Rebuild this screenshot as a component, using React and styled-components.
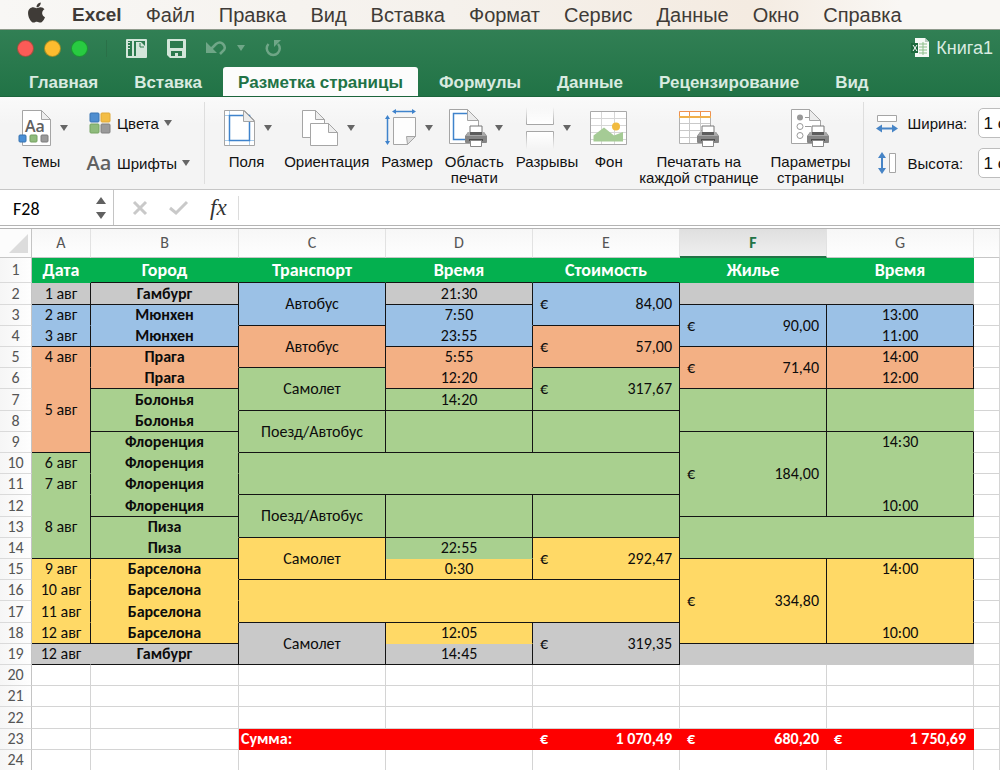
import React, { useState } from 'react';
import styled, { createGlobalStyle, css } from 'styled-components';
import { FaApple } from 'react-icons/fa';

const UI_FONT = '"Liberation Sans", Arial, sans-serif';
const CELL_FONT = 'Carlito, Lato, "Open Sans", sans-serif';

const FILLS = {
  head: '#04b04f',
  gray: '#c9c9c9',
  blue: '#9bc1e6',
  orange: '#f3b084',
  green: '#a9d08f',
  yellow: '#ffd966',
  red: '#fe0000'
};

const GlobalStyle = createGlobalStyle`
  * {
    box-sizing: border-box;
  }

  body {
    margin: 0;
    overflow: hidden;
    font-family: ${UI_FONT};
    color: #111;
    background: #fff;
  }

  button, input, select {
    margin: 0;
    padding: 0;
    border: 0;
    background: none;
    color: inherit;
    font: inherit;
  }
`;

// Styled Components
const Window = styled.div`
  display: flex;
  flex-direction: column;
  height: 100vh;
  overflow: hidden;
`;

const MenuBar = styled.nav`
  display: flex;
  align-items: center;
  gap: 24px;
  flex: none;
  height: 30px;
  padding-left: 25px;
  background: linear-gradient(90deg, #f8f7f5, #f5f1ec 45%, #f4ebe1 75%, #f9f7f4 90%);
  border-bottom: 1px solid #8f9a8c;
  color: #3f3b37;
`;

const MenuItem = styled.button`
  font-size: ${props => (props.$bold ? 19 : 20)}px;
  line-height: 28px;
  font-weight: ${props => (props.$bold ? 700 : 400)};
  white-space: nowrap;
`;

const AppleItem = styled(MenuItem)`
  display: flex;
  margin-top: -4px;
`;

const TitleArea = styled.header`
  flex: none;
  background: linear-gradient(#317f54, #217346);
  border-bottom: 1px solid #1c653c;
  color: #d9ebe0;
`;

const TitleBar = styled.div`
  display: flex;
  align-items: center;
  height: 36px;
  padding: 0 7px 0 17px;
`;

const Lights = styled.div`
  display: flex;
  gap: 10px;
  padding-right: 18px;
  margin-right: 19px;
  border-right: 1px solid #2a7048;
`;

const Light = styled.button`
  width: 17px;
  height: 17px;
  border-radius: 50%;
  border: 1px solid rgba(0, 60, 20, 0.35);
  background: ${props => props.$color};
`;

const QuickButton = styled.button`
  display: flex;
  align-items: center;
  gap: 10px;
  margin-right: 20px;
  color: #d3e6da;
  opacity: ${props => (props.$dim ? 0.4 : 1)};
`;

const BookTitle = styled.div`
  display: flex;
  align-items: center;
  gap: 6px;
  margin-left: auto;
  font-size: 18px;
  white-space: nowrap;
`;

const Tabs = styled.div`
  display: flex;
  align-items: flex-end;
  gap: 6px;
  height: 30px;
  padding-left: 14px;
`;

const Tab = styled.button`
  height: 29px;
  padding: 0 15px;
  font-size: 17px;
  line-height: 32px;
  font-weight: 700;
  white-space: nowrap;
  border-radius: 3px 3px 0 0;

  ${props => props.$active && css`
    background: #fcfcfc;
    color: #217346;
  `}
`;

const Ribbon = styled.section`
  display: flex;
  gap: 12px;
  flex: none;
  height: 93px;
  padding: 5px 0 0 15px;
  overflow: hidden;
  background: linear-gradient(#fafafa, #f4f4f4 30%);
  border-bottom: 1px solid #c6c6c6;
`;

const Divider = styled.div`
  flex: none;
  width: 1px;
  height: 82px;
  margin: 0 ${props => props.$space || 0}px 0 0;
  background: #dedede;
`;

const Tool = styled.button`
  display: flex;
  flex-direction: column;
  align-items: center;
  align-self: flex-start;
  flex: none;
  font-size: 15px;
  line-height: 16px;
  text-align: center;
  white-space: pre-line;
`;

const ToolIcon = styled.span`
  display: flex;
  align-items: center;
  gap: 8px;
  height: 52px;
  padding-left: ${props => (props.$arrow ? 3 : 0)}px;
`;

const Arrow = styled.span`
  width: 0;
  height: 0;
  border: 4px solid transparent;
  border-top: 6px solid ${props => props.$color || '#666'};
  border-bottom: 0;
`;

const SmallTools = styled.div`
  display: flex;
  flex-direction: column;
  gap: 10px;
  flex: none;
  margin: 0 2px 0 6px;
  padding-top: 6px;
`;

const SmallTool = styled.button`
  display: flex;
  align-items: center;
  gap: 5px;
  height: 30px;
  font-size: 15px;
  white-space: nowrap;
`;

const FontSample = styled.span`
  width: 26px;
  font-family: "Open Sans", sans-serif;
  font-size: 20px;
  line-height: 24px;
  font-weight: 600;
  color: #606060;
`;

const SizeFields = styled.div`
  display: flex;
  flex-direction: column;
  gap: 10px;
  flex: none;
  padding-top: 6px;
`;

const SizeField = styled.label`
  display: grid;
  grid-template-columns: 22px 60px 90px;
  align-items: center;
  gap: 10px;
  font-size: 15px;
`;

const SizeSelect = styled.select`
  height: 30px;
  padding: 0 5px;
  appearance: none;
  border: 1px solid #bdbdbd;
  border-radius: 5px;
  background: #fff;
  font-size: 17px;
`;

const FormulaBar = styled.section`
  display: flex;
  align-items: center;
  flex: none;
  height: 36px;
  background: #fff;
  border-bottom: 1px solid #b4b4b4;
`;

const NameBox = styled.div`
  display: flex;
  align-items: center;
  justify-content: space-between;
  width: 114px;
  height: 100%;
  padding: 0 7px 0 13px;
  border-right: 1px solid #c4c4c4;
`;

const NameInput = styled.input`
  width: 70px;
  padding-top: 3px;
  font-family: ${CELL_FONT};
  font-size: 18px;
  color: #000;
`;

const Stepper = styled.span`
  display: flex;
  flex-direction: column;
  gap: 8px;
`;

const StepButton = styled.button`
  border: 5px solid transparent;
  border-top: ${props => (props.$up ? '0' : '7px solid #606060')};
  border-bottom: ${props => (props.$up ? '7px solid #606060' : '0')};
`;

const FormulaActions = styled.div`
  display: flex;
  align-items: center;
  gap: 21px;
  padding: 0 11px 0 18px;
`;

const FormulaButton = styled.button`
  display: flex;
  font: italic 23px/30px "Liberation Serif", serif;
  color: #333;
`;

const FormulaInput = styled.input`
  flex: 1;
  height: 24px;
  padding: 0 6px;
  border-left: 1px solid #dcdcdc;
  font-family: ${CELL_FONT};
  font-size: 16px;
`;

const Sheet = styled.main`
  flex: 1;
  min-height: 0;
  overflow: hidden;
  margin-top: 2px;
  border-top: 1px solid #b4b4b4;
`;

const Grid = styled.table`
  width: 100%;
  table-layout: fixed;
  border-collapse: separate;
  border-spacing: 0;
  font-family: ${CELL_FONT};
  font-size: 16px;
  line-height: 20px;
  color: #0c0c0c;

  td, th {
    padding: 0;
    overflow: hidden;
    white-space: nowrap;
  }
`;

const ColumnHead = styled.th`
  height: 29px;
  font-weight: 400;
  color: #555;
  background: linear-gradient(#f7f7f7, #fefefe);
  border-right: 1px solid #e2e2e2;
  border-bottom: 1px solid #c6c6c6;

  ${props => props.$active && css`
    font-weight: 700;
    color: #217346;
    background: linear-gradient(#dfdfdf, #efefef);
    border-bottom: 2px solid #217346;
  `}
`;

const Corner = styled.th`
  background: #fcfcfc;
  border-right: 1px solid #c4c4c4;
  border-bottom: 1px solid #c6c6c6;
`;

const CornerMark = styled.span`
  display: block;
  width: 0;
  height: 0;
  margin-left: 9px;
  border-left: 19px solid transparent;
  border-bottom: 19px solid #dcdcdc;
`;

const Row = styled.tr`
  height: 21px;

  &:nth-child(5n + 2) {
    height: 22px;
  }

  &:first-child {
    height: 25px;
  }
`;

const RowHead = styled.th`
  font-weight: 400;
  color: #555;
  background: linear-gradient(90deg, #f6f6f6, #fefefe);
  border-right: 1px solid #c4c4c4;
  border-bottom: 1px solid #dadada;
`;

const edge = (on, fill) => {
  if (on) return '#141414';
  return fill ? 'transparent' : '#d4d4d4';
};

const Cell = styled.td`
  text-align: ${props => props.$align || 'center'};
  font-weight: ${props => (props.$bold ? 700 : 400)};
  color: ${props => (props.$light ? '#fff' : 'inherit')};
  font-size: ${props => (props.$title ? 18 : 16)}px;
  background-color: ${props => FILLS[props.$fill] || '#fff'};
  border-right: 1px solid ${props => edge(props.$right, props.$fill)};
  border-bottom: 1px solid ${props => edge(props.$bottom, props.$fill)};
`;

const Money = styled.span`
  display: flex;
  justify-content: space-between;
  padding: 0 7px;
`;

const SumLabel = styled.span`
  padding-left: 2px;
`;

// Icons
const Printer = ({ x, y }) => (
  <g transform={`translate(${x} ${y})`}>
    <path d="M5 8V1h12v7" fill="#fff" stroke="#777" />
    <path d="M3 7h16l3 4v6q0 1-1 1H1q-1 0-1-1v-6z" fill="#858585" />
    <path d="M3 7h16l2 4H1z" fill="#a9a9a9" />
    <path d="M5 7h12v3H5z" fill="#5c5c5c" />
    <path d="M4 14h14v2H4z" fill="#4c4c4c" />
    <path d="M5.500 15.500h11v6h-11z" fill="#fff" stroke="#888" />
  </g>
);

const ThemesIcon = () => (
  <svg width="34" height="38" viewBox="0 0 34 38">
    <path d="M4.500 1.500h19l9 9v26h-28z" fill="#fff" stroke="#a5a5a5" />
    <path d="M23.500 1.500v9h9z" fill="#eee" stroke="#a5a5a5" />
    <text x="7" y="23" fontFamily="Open Sans, sans-serif" fontSize="16" fontWeight="600" fill="#606060">Aa</text>
    <rect x="1" y="26" width="7" height="7" rx="1" fill="#4a8fd6" stroke="#3672b0" />
    <rect x="12" y="26" width="7" height="7" rx="1" fill="#8fbb7c" stroke="#74a061" />
    <rect x="23" y="26" width="7" height="7" rx="1" fill="#9a9a9a" stroke="#7c7c7c" />
  </svg>
);

const ColorsIcon = () => (
  <svg width="26" height="22" viewBox="-3 0 26 22">
    <rect x="1" y="1" width="9" height="9" rx="1" fill="#4f8ed0" stroke="#3a74b3" />
    <rect x="12" y="1" width="9" height="9" rx="1" fill="#f3bd45" stroke="#e0a93a" />
    <rect x="1" y="12" width="9" height="9" rx="1" fill="#8fbb7c" stroke="#76a463" />
    <rect x="12" y="12" width="9" height="9" rx="1" fill="#9a9a9a" stroke="#808080" />
  </svg>
);

const MarginsIcon = () => (
  <svg width="32" height="38" viewBox="0 0 32 38">
    <path d="M.5 1.500h20l10 10v25H.5z" fill="#fff" stroke="#a5a5a5" />
    <path d="M5.500 2v34M25.500 12v24M1 6.500h18M1 31.500h29" stroke="#a9cdec" />
    <path d="M5.500 6.500h20v25h-20z" fill="none" stroke="#3f83cc" strokeWidth="1.500" />
    <path d="M19.500 1.500v11h11z" fill="#ececec" stroke="#a5a5a5" />
  </svg>
);

const OrientationIcon = () => (
  <svg width="37" height="38" viewBox="0 0 37 38">
    <path d="M.5 1.500h13l9 9v18H.5z" fill="#fff" stroke="#a5a5a5" />
    <path d="M13.500 1.500v9h9z" fill="#eee" stroke="#a5a5a5" />
    <path d="M8.500 14.500h18l9 9v13h-27z" fill="#fff" stroke="#a5a5a5" />
    <path d="M26.500 14.500v9h9z" fill="#eee" stroke="#a5a5a5" />
  </svg>
);

const SizeIcon = () => (
  <svg width="32" height="38" viewBox="0 0 32 38">
    <path d="M8.500 8.500h22v19l-8 8h-14z" fill="#fdfdfd" stroke="#a5a5a5" />
    <path d="M22.500 35.500l-1-8 9 0z" fill="#ddd" stroke="#a5a5a5" />
    <path d="M9 2.500h20M2.500 8v26" stroke="#3f83cc" strokeWidth="1.500" />
    <path d="M7 2.500l4-2.500v5zM31 2.500l-4-2.500v5zM2.500 6L0 10h5zM2.500 36L0 32h5z" fill="#3f83cc" />
  </svg>
);

const PrintAreaIcon = () => (
  <svg width="38" height="38" viewBox="0 0 38 38">
    <path d="M.5 .5h18l11 11v23H.5z" fill="#fff" stroke="#a5a5a5" />
    <path d="M18 4.500H4.500v26H17" fill="none" stroke="#3f83cc" strokeWidth="1.500" />
    <path d="M18.500 .5v11h11z" fill="#ececec" stroke="#a5a5a5" />
    <Printer x={16} y={16} />
  </svg>
);

const BreaksIcon = () => (
  <svg width="30" height="42" viewBox="0 0 30 42">
    <defs>
      <linearGradient id="fadeTop" x1="0" y1="0" x2="0" y2="1">
        <stop offset="0" stopColor="#a5a5a5" stopOpacity="0" />
        <stop offset="1" stopColor="#a5a5a5" />
      </linearGradient>
      <linearGradient id="fadeBottom" x1="0" y1="1" x2="0" y2="0">
        <stop offset="0" stopColor="#a5a5a5" stopOpacity="0" />
        <stop offset="1" stopColor="#a5a5a5" />
      </linearGradient>
      <linearGradient id="paper" x1="0" y1="0" x2="0" y2="1">
        <stop offset="0" stopColor="#fff" stopOpacity="0" />
        <stop offset=".4" stopColor="#fff" />
        <stop offset=".6" stopColor="#fff" />
        <stop offset="1" stopColor="#fff" stopOpacity="0" />
      </linearGradient>
    </defs>
    <path d="M1 0h28v42H1z" fill="url(#paper)" />
    <path d="M1 18h28v6H1z" fill="#f5f5f5" />
    <path d="M1.500 0v17.500h27V0" fill="none" stroke="url(#fadeTop)" />
    <path d="M1.500 42V24.500h27V42" fill="none" stroke="url(#fadeBottom)" />
  </svg>
);

const BackgroundIcon = () => (
  <svg width="37" height="36" viewBox="0 0 37 36">
    <path d="M.5 1.500h36v33H.5z" fill="#fff" stroke="#a9a9a9" />
    <path d="M11.500 2v32M24.500 2v32M1 8.500h35M1 15.500h35M1 22.500h35M1 29.500h35" stroke="#d6d6d6" />
    <path d="M3.500 31.500v-6L14 17.500l10 8 9-3.500v9.500z" fill="#a5cb95" />
    <circle cx="26" cy="16.500" r="4" fill="#f1bb40" />
  </svg>
);

const PrintTitlesIcon = () => (
  <svg width="42" height="38" viewBox="0 0 42 38">
    <path d="M1.500 3.500h31v31h-31z" fill="#fff" stroke="#b0b0b0" />
    <path d="M11.500 8v26M22.500 8v26M2 14.500h30M2 21.500h30M2 28.500h30" stroke="#c9c9c9" />
    <path d="M1.500 2.500h31v5h-31zM11.500 3v5M22.500 3v5" fill="#fff" stroke="#ee9150" />
    <path d="M1 8h32" stroke="#f0b04b" strokeWidth="2" />
    <Printer x={19} y={16} />
  </svg>
);

const PageSetupIcon = () => (
  <svg width="39" height="38" viewBox="0 0 39 38">
    <path d="M.5 .5h18l11 11v23H.5z" fill="#fff" stroke="#a5a5a5" />
    <path d="M18.500 .5v11h11z" fill="#ececec" stroke="#a5a5a5" />
    <circle cx="9" cy="8.500" r="3" fill="#999" />
    <circle cx="9" cy="17.500" r="3" fill="none" stroke="#999" />
    <circle cx="9" cy="26.500" r="3" fill="none" stroke="#999" />
    <path d="M14 8.500h4M14 17.500h6" stroke="#999" />
    <Printer x={16} y={16} />
  </svg>
);

const WidthIcon = () => (
  <svg width="22" height="20" viewBox="0 0 22 20">
    <path d="M1.500 2.500h19v6h-19z" fill="#fff" stroke="#a5a5a5" />
    <path d="M4 15.500h14" stroke="#4684c6" strokeWidth="2" />
    <path d="M0 15.500l6-4v8zM22 15.500l-6-4v8z" fill="#4684c6" />
  </svg>
);

const HeightIcon = () => (
  <svg width="22" height="22" viewBox="0 0 22 22">
    <path d="M13.500 1.500h6v19h-6z" fill="#fff" stroke="#a5a5a5" />
    <path d="M6 4v14" stroke="#4684c6" strokeWidth="2" />
    <path d="M6 0l-4 6h8zM6 22l-4-6h8z" fill="#4684c6" />
  </svg>
);

const TemplateIcon = () => (
  <svg width="21" height="19" viewBox="0 0 21 19">
    <rect width="21" height="19" rx="1" fill="currentColor" />
    <path d="M2 2h4v15H2zM8 2h11v15H8z" fill="#2c7a4e" />
    <path d="M2 3.500h2M2 6.500h2M2 9.500h2" stroke="currentColor" />
    <path d="M10 3h5l4 4v10h-9z" fill="currentColor" />
    <path d="M14 4v4h4" fill="none" stroke="#2c7a4e" />
  </svg>
);

const SaveIcon = () => (
  <svg width="19" height="19" viewBox="0 0 19 19">
    <path d="M0 1q0-1 1-1h17q1 0 1 1v17q0 1-1 1H3l-3-3z" fill="currentColor" />
    <path d="M3 2h13v7H3zM4 12h11v5h-4v-3H8v3H4z" fill="#2c7a4e" />
  </svg>
);

const UndoIcon = () => (
  <svg width="21" height="16" viewBox="0 0 21 16">
    <path d="M0 2v11h11z" fill="currentColor" />
    <path d="M5 9l5-5q4-3 7 0t1 6l-4 4" fill="none" stroke="currentColor" strokeWidth="2.500" />
  </svg>
);

const RedoIcon = () => (
  <svg width="17" height="18" viewBox="0 0 17 18">
    <path d="M3.500 5a6.500 6.500 0 1 0 9.500 0" fill="none" stroke="currentColor" strokeWidth="2.500" />
    <path d="M9 1h7l-7 7z" fill="currentColor" />
  </svg>
);

const BookIcon = () => (
  <svg width="19" height="20" viewBox="0 0 19 20">
    <path d="M4 0h10l4 4v15H4z" fill="#f5faf6" />
    <path d="M14 0v4h4z" fill="#b9cbbf" />
    <path d="M8 6h8M8 9h8M8 12h8M8 15h8M12 4v13" stroke="#8dbf8a" />
    <path d="M0 5h7v10H0z" fill="#1d6a3e" />
    <path d="M2 7l4 6M6 7l-4 6" stroke="#fff" />
  </svg>
);

const CancelIcon = () => (
  <svg width="16" height="16" viewBox="0 0 16 16">
    <path d="M2 2l12 12M14 2L2 14" stroke="#c9c9c9" strokeWidth="3" />
  </svg>
);

const AcceptIcon = () => (
  <svg width="20" height="16" viewBox="0 0 20 16">
    <path d="M1 8l6 5L18 2" fill="none" stroke="#c9c9c9" strokeWidth="3" />
  </svg>
);

// Data
const MENU = ['Файл', 'Правка', 'Вид', 'Вставка', 'Формат', 'Сервис', 'Данные', 'Окно', 'Справка'];
const TABS = ['Главная', 'Вставка', 'Разметка страницы', 'Формулы', 'Данные', 'Рецензирование', 'Вид'];
const COLUMNS = ['A', 'B', 'C', 'D', 'E', 'F', 'G'];
const COLUMN_WIDTHS = [32, 59, 148, 147, 147, 147, 147, 147];

const TOOLS = [
  { label: 'Поля', icon: MarginsIcon, arrow: true },
  { label: 'Ориентация', icon: OrientationIcon, arrow: true },
  { label: 'Размер', icon: SizeIcon, arrow: true },
  { label: 'Область\nпечати', icon: PrintAreaIcon, arrow: true },
  { label: 'Разрывы', icon: BreaksIcon, arrow: true },
  { label: 'Фон', icon: BackgroundIcon },
  { label: 'Печатать на\nкаждой странице', icon: PrintTitlesIcon },
  { label: 'Параметры\nстраницы', icon: PageSetupIcon }
];

// edges: "b" draws the bottom line, "r" the right line
const cell = (text, fill, edges = '', extra = {}) => ({ text, fill, edges, ...extra });
const title = (text, edges) => cell(text, 'head', edges, { bold: true, light: true, title: true });
const city = (text, fill, edges) => cell(text, fill, edges, { bold: true });
const tall = (text, fill, edges, rows = 2) => cell(text, fill, edges, { rows });
const money = (text, fill, rows = 2) => cell(text, fill, 'br', { rows, money: true });
const total = text => cell(text, 'red', '', { money: true, bold: true, light: true });
const wide = (fill, edges, rows, cols) => cell('', fill, edges, { rows, cols });

const ROWS = [
  [title('Дата'), title('Город', 'b'), title('Транспорт', 'b'), title('Время', 'b'), title('Стоимость', 'b'), title('Жилье'), title('Время')],
  [cell('1 авг', 'gray', 'br'), city('Гамбург', 'gray', 'br'), tall('Автобус', 'blue', 'br'), cell('21:30', 'gray', 'br'), money('84,00', 'blue'), wide('gray', 'b', 1, 2)],
  [cell('2 авг', 'blue', 'r'), city('Мюнхен', 'blue', 'r'), cell('7:50', 'blue', 'r'), money('90,00', 'blue'), cell('13:00', 'blue', 'r')],
  [cell('3 авг', 'blue', 'br'), city('Мюнхен', 'blue', 'br'), tall('Автобус', 'orange', 'br'), cell('23:55', 'blue', 'br'), money('57,00', 'orange'), cell('11:00', 'blue', 'br')],
  [cell('4 авг', 'orange', 'r'), city('Прага', 'orange', 'r'), cell('5:55', 'orange', 'r'), money('71,40', 'orange'), cell('14:00', 'orange', 'r')],
  [tall('5 авг', 'orange', 'br', 4), city('Прага', 'orange', 'br'), tall('Самолет', 'green', 'br'), cell('12:20', 'orange', 'br'), money('317,67', 'green'), cell('12:00', 'orange', 'br')],
  [city('Болонья', 'green', 'r'), cell('14:20', 'green', 'br'), tall('', 'green', 'br'), tall('', 'green', 'b')],
  [city('Болонья', 'green', 'br'), tall('Поезд/Автобус', 'green', 'br'), tall('', 'green', 'br'), tall('', 'green', 'br')],
  [city('Флоренция', 'green', 'r'), money('184,00', 'green', 4), cell('14:30', 'green', 'r')],
  [cell('6 авг', 'green', 'r'), city('Флоренция', 'green', 'r'), wide('green', 'br', 2, 3), cell('', 'green', 'r')],
  [cell('7 авг', 'green', 'r'), city('Флоренция', 'green', 'r'), cell('', 'green', 'r')],
  [tall('8 авг', 'green', 'br', 3), city('Флоренция', 'green', 'br'), tall('Поезд/Автобус', 'green', 'br'), tall('', 'green', 'br'), tall('', 'green', 'br'), cell('10:00', 'green', 'br')],
  [city('Пиза', 'green', 'r'), wide('green', 'b', 2, 2)],
  [city('Пиза', 'green', 'br'), tall('Самолет', 'yellow', 'br'), cell('22:55', 'green', 'r'), money('292,47', 'yellow')],
  [cell('9 авг', 'yellow', 'r'), city('Барселона', 'yellow', 'r'), cell('0:30', 'yellow', 'br'), money('334,80', 'yellow', 4), cell('14:00', 'yellow', 'r')],
  [cell('10 авг', 'yellow', 'r'), city('Барселона', 'yellow', 'r'), wide('yellow', 'br', 2, 3), cell('', 'yellow', 'r')],
  [cell('11 авг', 'yellow', 'r'), city('Барселона', 'yellow', 'r'), cell('', 'yellow', 'r')],
  [cell('12 авг', 'yellow', 'br'), city('Барселона', 'yellow', 'br'), tall('Самолет', 'gray', 'br'), cell('12:05', 'yellow', 'r'), money('319,35', 'gray'), cell('10:00', 'yellow', 'br')],
  [cell('12 авг', 'gray', 'b'), city('Гамбург', 'gray', 'br'), cell('14:45', 'gray', 'br'), wide('gray', '', 1, 2)],
  COLUMNS.map(() => cell('')),
  COLUMNS.map(() => cell('')),
  COLUMNS.map(() => cell('')),
  [cell(''), cell(''), cell('Сумма:', 'red', '', { bold: true, light: true, align: 'left' }), cell('', 'red'), total('1 070,49'), total('680,20'), total('1 750,69')],
  COLUMNS.map(() => cell(''))
];

const CellContent = ({ data }) => {
  if (data.money) {
    return (
      <Money>
        <span>€</span>
        <span>{data.text}</span>
      </Money>
    );
  }
  return data.align === 'left' ? <SumLabel>{data.text}</SumLabel> : data.text;
};

const Spreadsheet = () => (
  <Sheet>
    <Grid>
      <colgroup>
        {COLUMN_WIDTHS.map((width, i) => <col key={i} width={width} />)}
        <col />
      </colgroup>
      <thead>
        <tr>
          <Corner><CornerMark /></Corner>
          {COLUMNS.map(name => (
            <ColumnHead key={name} scope="col" $active={name === 'F'}>{name}</ColumnHead>
          ))}
          <ColumnHead />
        </tr>
      </thead>
      <tbody>
        {ROWS.map((cells, i) => (
          <Row key={i}>
            <RowHead scope="row">{i + 1}</RowHead>
            {cells.map((data, j) => (
              <Cell
                key={j}
                rowSpan={data.rows}
                colSpan={data.cols}
                $fill={data.fill}
                $align={data.align}
                $bold={data.bold}
                $light={data.light}
                $title={data.title}
                $bottom={data.edges.includes('b')}
                $right={data.edges.includes('r')}
              >
                <CellContent data={data} />
              </Cell>
            ))}
            <Cell />
          </Row>
        ))}
      </tbody>
    </Grid>
  </Sheet>
);

const App = () => {
  const [activeTab, setActiveTab] = useState('Разметка страницы');
  const [address, setAddress] = useState('F28');
  const [formula, setFormula] = useState('');

  return (
    <Window>
      <GlobalStyle />
      <MenuBar>
        <AppleItem aria-label="Apple"><FaApple size={23} /></AppleItem>
        <MenuItem $bold>Excel</MenuItem>
        {MENU.map(item => <MenuItem key={item}>{item}</MenuItem>)}
      </MenuBar>

      <TitleArea>
        <TitleBar>
          <Lights>
            <Light $color="#fc5b57" aria-label="Закрыть" />
            <Light $color="#fdbc2f" aria-label="Свернуть" />
            <Light $color="#28cb41" aria-label="Развернуть" />
          </Lights>
          <QuickButton aria-label="Шаблоны"><TemplateIcon /></QuickButton>
          <QuickButton aria-label="Сохранить"><SaveIcon /></QuickButton>
          <QuickButton $dim aria-label="Отменить"><UndoIcon /><Arrow $color="#d3e6da" /></QuickButton>
          <QuickButton $dim aria-label="Вернуть"><RedoIcon /></QuickButton>
          <BookTitle>
            <BookIcon />
            Книга1
          </BookTitle>
        </TitleBar>
        <Tabs role="tablist">
          {TABS.map(tab => (
            <Tab
              key={tab}
              role="tab"
              aria-selected={tab === activeTab}
              $active={tab === activeTab}
              onClick={() => setActiveTab(tab)}
            >
              {tab}
            </Tab>
          ))}
        </Tabs>
      </TitleArea>

      <Ribbon>
        <Tool>
          <ToolIcon $arrow><ThemesIcon /><Arrow /></ToolIcon>
          Темы
        </Tool>
        <SmallTools>
          <SmallTool><ColorsIcon />Цвета<Arrow /></SmallTool>
          <SmallTool><FontSample>Aa</FontSample>Шрифты<Arrow /></SmallTool>
        </SmallTools>
        <Divider $space={4} />
        {TOOLS.map(({ label, icon: Icon, arrow }) => (
          <Tool key={label}>
            <ToolIcon $arrow={arrow}><Icon />{arrow && <Arrow />}</ToolIcon>
            {label}
          </Tool>
        ))}
        <Divider />
        <SizeFields>
          <SizeField>
            <WidthIcon />
            Ширина:
            <SizeSelect><option>1 стр.</option></SizeSelect>
          </SizeField>
          <SizeField>
            <HeightIcon />
            Высота:
            <SizeSelect><option>1 стр.</option></SizeSelect>
          </SizeField>
        </SizeFields>
      </Ribbon>

      <FormulaBar>
        <NameBox>
          <NameInput aria-label="Имя" value={address} onChange={e => setAddress(e.target.value)} />
          <Stepper>
            <StepButton $up aria-label="Вверх" />
            <StepButton aria-label="Вниз" />
          </Stepper>
        </NameBox>
        <FormulaActions>
          <FormulaButton aria-label="Отмена"><CancelIcon /></FormulaButton>
          <FormulaButton aria-label="Ввод"><AcceptIcon /></FormulaButton>
          <FormulaButton>fx</FormulaButton>
        </FormulaActions>
        <FormulaInput aria-label="Формула" value={formula} onChange={e => setFormula(e.target.value)} />
      </FormulaBar>

      <Spreadsheet />
    </Window>
  );
};

export default App;
